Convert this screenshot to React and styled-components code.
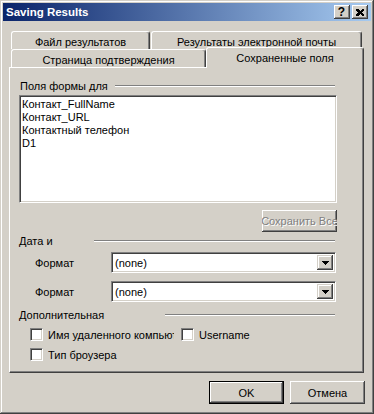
import React from 'react';
import styled, { createGlobalStyle } from 'styled-components';

const face = '#d4d0c8';
const shadow = '#808080';
const dark = '#404040';

const GlobalStyle = createGlobalStyle`
  body {
    margin: 0;
    background: ${face};
    font-family: "Liberation Sans", Arial, sans-serif;
    font-size: 11px;
    color: #000;
  }
`;

const Window = styled.div`
  width: 374px;
  height: 414px;
  box-sizing: border-box;
  padding: 3px;
  background: ${face};
  box-shadow: inset -1px -1px ${dark}, inset 1px 1px ${face}, inset -2px -2px ${shadow}, inset 2px 2px #fff;
  display: flex;
  flex-direction: column;
`;

const TitleBar = styled.div`
  height: 18px;
  display: flex;
  align-items: center;
  padding: 0 3px 0 3px;
  background: linear-gradient(to right, #0a246a, #a6caf0);
  color: #fff;
  font-weight: bold;
  font-size: 11.5px;
`;

const Caption = styled.div`
  flex: 1;
  white-space: nowrap;
`;

const CaptionButton = styled.div`
  box-sizing: border-box;
  width: 16px;
  height: 14px;
  margin-left: 2px;
  background: ${face};
  box-shadow: inset -1px -1px ${dark}, inset 1px 1px #fff, inset -2px -2px ${shadow};
  display: flex;
  align-items: center;
  justify-content: center;
  color: #000;
  font-weight: bold;
  font-size: 12px;
  padding-right: 1px;
`;

const Body = styled.div`
  flex: 1;
  display: flex;
  flex-direction: column;
  padding: 10px 7px 0 6px;
`;

const TabRow = styled.div`
  display: flex;
  height: 18px;
  padding-left: 2px;
  gap: ${p => p.$gap || 0}px;
`;

const Tab = styled.div`
  box-sizing: border-box;
  width: ${p => p.$w}px;
  height: ${p => (p.$selected ? 21 : 18)}px;
  margin-top: ${p => (p.$selected ? -2 : 0)}px;
  background: ${face};
  border-top: 1px solid #fff;
  border-left: 1px solid #fff;
  border-right: 1px solid ${dark};
  box-shadow: inset -1px 0 ${shadow};
  border-radius: 3px 3px 0 0;
  display: flex;
  align-items: center;
  justify-content: center;
  padding-top: ${p => (p.$selected ? 0 : 2)}px;
  position: relative;
  z-index: ${p => (p.$selected ? 2 : 1)};
  white-space: nowrap;
`;

const Panel = styled.div`
  box-sizing: border-box;
  width: 355px;
  height: 306px;
  border: 1px solid;
  border-color: #fff ${dark} ${dark} #fff;
  box-shadow: inset -1px -1px ${shadow};
  padding: 0 26px 0 9px;
  display: flex;
  flex-direction: column;
`;

const GroupHeader = styled.div`
  display: grid;
  grid-template-columns: ${p => p.$labelWidth}px 1fr;
  align-items: center;
  height: 13px;
  margin-top: ${p => p.$mt}px;
`;

const GroupLabel = styled.div`
  padding-left: ${p => p.$pl || 0}px;
  white-space: nowrap;
`;

const EtchedLine = styled.div`
  height: 0;
  border-top: 1px solid ${shadow};
  border-bottom: 1px solid #fff;
  margin-right: 2px;
`;

const ListBox = styled.div`
  box-sizing: border-box;
  height: 108px;
  margin-top: 3px;
  background: #fff;
  border: 1px solid;
  border-color: ${shadow} #fff #fff ${shadow};
  box-shadow: inset 1px 1px ${dark}, inset -1px -1px ${face};
  padding: 2px 1px;
`;

const ListItem = styled.div`
  line-height: 13px;
  padding-left: 1px;
  white-space: nowrap;
`;

const ButtonRow = styled.div`
  display: flex;
  justify-content: flex-end;
  gap: 6px;
  margin-top: ${p => p.$mt}px;
  margin-right: ${p => p.$mr || 0}px;
`;

const Button = styled.div`
  box-sizing: border-box;
  width: ${p => p.$w}px;
  height: ${p => p.$h}px;
  background: ${face};
  display: flex;
  align-items: center;
  justify-content: center;
  overflow: hidden;
  white-space: nowrap;
  color: ${p => (p.$disabled ? shadow : '#000')};
  text-shadow: ${p => (p.$disabled ? '1px 1px #fff' : 'none')};
  box-shadow: ${p =>
    p.$default
      ? `inset 0 0 0 1px #000, inset -2px -2px ${dark}, inset 2px 2px #fff, inset -3px -3px ${shadow}`
      : `inset -1px -1px ${dark}, inset 1px 1px #fff, inset -2px -2px ${shadow}`};
`;

const FieldRow = styled.div`
  display: grid;
  grid-template-columns: 92px 225px;
  align-items: center;
  height: 21px;
  margin-top: ${p => p.$mt}px;
`;

const FieldLabel = styled.div`
  padding-left: 16px;
`;

const Combo = styled.div`
  box-sizing: border-box;
  height: 21px;
  background: #fff;
  border: 1px solid;
  border-color: ${shadow} #fff #fff ${shadow};
  box-shadow: inset 1px 1px ${dark}, inset -1px -1px ${face};
  padding: 2px 2px 2px 2px;
  display: flex;
  align-items: stretch;
`;

const ComboText = styled.div`
  flex: 1;
  padding-left: 1px;
  display: flex;
  align-items: center;
`;

const DropButton = styled.div`
  box-sizing: border-box;
  width: 16px;
  background: ${face};
  box-shadow: inset -1px -1px ${dark}, inset 1px 1px ${face}, inset -2px -2px ${shadow}, inset 2px 2px #fff;
  display: flex;
  align-items: center;
  justify-content: center;
`;

const CheckRow = styled.div`
  display: flex;
  align-items: center;
  height: 13px;
  padding-left: 11px;
  margin-top: ${p => p.$mt}px;
`;

const CheckBox = styled.div`
  box-sizing: border-box;
  flex: none;
  width: 13px;
  height: 13px;
  margin-left: ${p => p.$ml || 0}px;
  background: #fff;
  border: 1px solid;
  border-color: ${shadow} #fff #fff ${shadow};
  box-shadow: inset 1px 1px ${dark}, inset -1px -1px ${face};
`;

const CheckLabel = styled.div`
  margin-left: 5px;
  white-space: nowrap;
  overflow: hidden;
  width: ${p => (p.$w ? `${p.$w}px` : 'auto')};
`;

const Arrow = () => (
  <svg width="7" height="4" viewBox="0 0 7 4" shapeRendering="crispEdges">
    <rect x="0" y="0" width="7" height="1" fill="#000" />
    <rect x="1" y="1" width="5" height="1" fill="#000" />
    <rect x="2" y="2" width="3" height="1" fill="#000" />
    <rect x="3" y="3" width="1" height="1" fill="#000" />
  </svg>
);

const CloseGlyph = () => (
  <svg width="8" height="7" viewBox="0 0 8 7" shapeRendering="crispEdges">
    <path d="M0 0h2l2 2 2-2h2v1L6 3.5 8 6v1H6L4 5 2 7H0V6l2-2.5L0 1z" fill="#000" />
  </svg>
);

const ComboBox = ({ value }) => (
  <Combo>
    <ComboText>{value}</ComboText>
    <DropButton>
      <Arrow />
    </DropButton>
  </Combo>
);

export default function App() {
  return (
    <>
      <GlobalStyle />
      <Window>
        <TitleBar>
          <Caption>Saving Results</Caption>
          <CaptionButton>?</CaptionButton>
          <CaptionButton>
            <CloseGlyph />
          </CaptionButton>
        </TitleBar>
        <Body>
          <TabRow $gap={1}>
            <Tab $w={139}>Файл результатов</Tab>
            <Tab $w={211}>Результаты электронной почты</Tab>
          </TabRow>
          <TabRow>
            <Tab $w={195}>Страница подтверждения</Tab>
            <Tab $w={158} $selected>Сохраненные поля</Tab>
          </TabRow>
          <Panel>
            <GroupHeader $labelWidth={96} $mt={11}>
              <GroupLabel $pl={1}>Поля формы для</GroupLabel>
              <EtchedLine />
            </GroupHeader>
            <ListBox>
              <ListItem>Контакт_FullName</ListItem>
              <ListItem>Контакт_URL</ListItem>
              <ListItem>Контактный телефон</ListItem>
              <ListItem>D1</ListItem>
            </ListBox>
            <ButtonRow $mt={7}>
              <Button $w={75} $h={22} $disabled>Сохранить Все</Button>
            </ButtonRow>
            <GroupHeader $labelWidth={75} $mt={2}>
              <GroupLabel>Дата и</GroupLabel>
              <EtchedLine />
            </GroupHeader>
            <FieldRow $mt={5}>
              <FieldLabel>Формат</FieldLabel>
              <ComboBox value="(none)" />
            </FieldRow>
            <FieldRow $mt={8}>
              <FieldLabel>Формат</FieldLabel>
              <ComboBox value="(none)" />
            </FieldRow>
            <GroupHeader $labelWidth={146} $mt={6}>
              <GroupLabel>Дополнительная</GroupLabel>
              <EtchedLine />
            </GroupHeader>
            <CheckRow $mt={7}>
              <CheckBox />
              <CheckLabel $w={126}>Имя удаленного компьютера</CheckLabel>
              <CheckBox $ml={7} />
              <CheckLabel>Username</CheckLabel>
            </CheckRow>
            <CheckRow $mt={7}>
              <CheckBox />
              <CheckLabel>Тип броузера</CheckLabel>
            </CheckRow>
          </Panel>
          <ButtonRow $mt={8} $mr={-1}>
            <Button $w={75} $h={23} $default>OK</Button>
            <Button $w={75} $h={23}>Отмена</Button>
          </ButtonRow>
        </Body>
      </Window>
    </>
  );
}
